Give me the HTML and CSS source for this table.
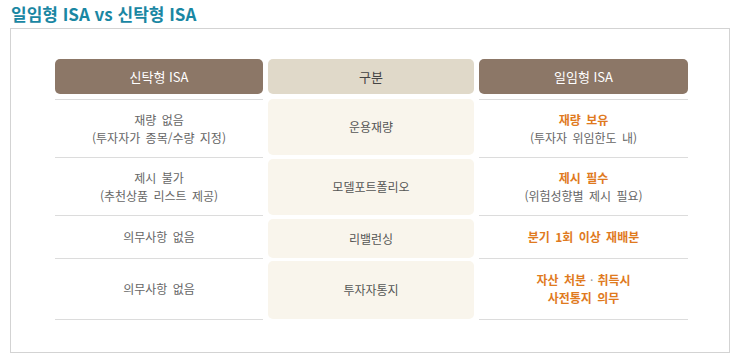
FILE: index.html
```html
<!DOCTYPE html>
<html lang="ko">
<head>
<meta charset="utf-8">
<link rel="stylesheet" href="styles.css">
</head>
<body>
<h1 class="title">일임형 ISA vs 신탁형 ISA</h1>
<div class="box">
  <div class="grid">
    <div class="head side">신탁형 ISA</div>
    <div class="head mid">구분</div>
    <div class="head side">일임형 ISA</div>

    <div class="cell side first"><p>재량 없음<br>(투자자가 종목/수량 지정)</p></div>
    <div class="cell mid m1"><p>운용재량</p></div>
    <div class="cell side first"><p><b>재량 보유</b><br>(투자자 위임한도 내)</p></div>

    <div class="cell side"><p>제시 불가<br>(추천상품 리스트 제공)</p></div>
    <div class="cell mid m2"><p>모델포트폴리오</p></div>
    <div class="cell side"><p><b>제시 필수</b><br>(위험성향별 제시 필요)</p></div>

    <div class="cell side"><p>의무사항 없음</p></div>
    <div class="cell mid m3"><p>리밸런싱</p></div>
    <div class="cell side"><p><b>분기 1회 이상 재배분</b></p></div>

    <div class="cell side"><p>의무사항 없음</p></div>
    <div class="cell mid m4"><p>투자자통지</p></div>
    <div class="cell side"><p><b>자산 처분<span class="dot">·</span>취득시<br>사전통지 의무</b></p></div>
  </div>
</div>
</body>
</html>
```

FILE: styles.css
```css
* { box-sizing: border-box; }
body {
  margin: 0;
  background: #fff;
  font-family: "Noto Sans CJK KR", "Noto Sans", sans-serif;
}
.title {
  margin: 0;
  padding: 4px 0 0 11px;
  height: 28px;
  font-size: 17px;
  font-weight: bold;
  color: #1a87a3;
  line-height: 20px;
}
.box {
  margin-left: 10px;
  width: 720px;
  height: 325px;
  border: 1px solid #d3d3d3;
  padding: 30px 0 0 44px;
}
.grid {
  display: grid;
  grid-template-columns: 208px 206px 209px;
  grid-template-rows: 40px 59px 58px 43px 61px;
  column-gap: 5px;
}
.head {
  height: 35px;
  border-radius: 5px;
  display: flex;
  align-items: center;
  justify-content: center;
  font-size: 13px;
}
.head.side { background: #8c7767; color: #fff; }
.head.mid { background: #e0d9c9; color: #444; }
.cell {
  display: flex;
  align-items: center;
  justify-content: center;
  text-align: center;
  font-size: 12px;
  line-height: 18px;
  color: #666;
  word-spacing: 2px;
}
.cell p { margin: 0; }
.cell.side { border-bottom: 1px solid #dcdcdc; }
.cell.side.first { border-top: 1px solid #dcdcdc; }
.cell b { color: #e07a1e; font-weight: bold; }
.dot { margin: 0 4px; font-weight: normal; color: #999; }
.cell.mid {
  background: #f9f5ec;
  border-radius: 5px;
  color: #555;
}
.m1 { margin: 0 0 3px; }
.m2 { margin: 1px 0 1px; }
.m3 { margin: 3px 0 1px; }
.m4 { margin: 2px 0 1px; }
```
